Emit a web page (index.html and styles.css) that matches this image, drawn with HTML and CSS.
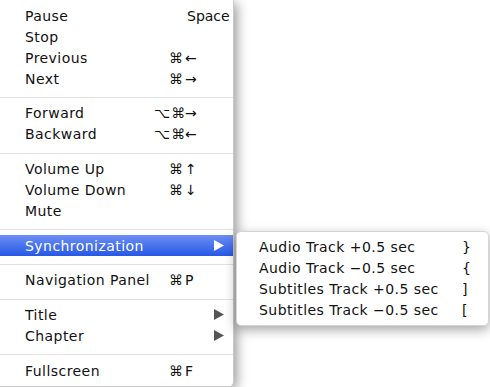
FILE: index.html
```html
<!DOCTYPE html>
<html lang="en">

<head>
    <meta charset="UTF-8">
    <title>Playback Menu</title>
    <link rel="stylesheet" href="styles.css">
</head>

<body>

    <!-- Main playback menu -->
    <div class="menu">
        <div class="item"><span class="label">Pause</span><span class="mods"></span><span class="key space">Space</span></div>
        <div class="item"><span class="label">Stop</span></div>
        <div class="item"><span class="label">Previous</span><span class="mods">⌘</span><span class="key">←</span></div>
        <div class="item"><span class="label">Next</span><span class="mods">⌘</span><span class="key">→</span></div>
        <div class="sep"></div>
        <div class="item"><span class="label">Forward</span><span class="mods">⌥⌘</span><span class="key">→</span></div>
        <div class="item"><span class="label">Backward</span><span class="mods">⌥⌘</span><span class="key">←</span></div>
        <div class="sep"></div>
        <div class="item"><span class="label">Volume Up</span><span class="mods">⌘</span><span class="key">↑</span></div>
        <div class="item"><span class="label">Volume Down</span><span class="mods">⌘</span><span class="key">↓</span></div>
        <div class="item"><span class="label">Mute</span></div>
        <div class="sep"></div>
        <div class="item selected">
            <span class="label">Synchronization</span><span class="mods"></span>
            <span class="key"><svg class="arrow" width="10" height="11" viewBox="0 0 10 11"><polygon points="0,0 10,5.5 0,11" /></svg></span>
        </div>
        <div class="sep"></div>
        <div class="item"><span class="label">Navigation Panel</span><span class="mods">⌘</span><span class="key">P</span></div>
        <div class="sep"></div>
        <div class="item">
            <span class="label">Title</span><span class="mods"></span>
            <span class="key"><svg class="arrow" width="10" height="11" viewBox="0 0 10 11"><polygon points="0,0 10,5.5 0,11" /></svg></span>
        </div>
        <div class="item">
            <span class="label">Chapter</span><span class="mods"></span>
            <span class="key"><svg class="arrow" width="10" height="11" viewBox="0 0 10 11"><polygon points="0,0 10,5.5 0,11" /></svg></span>
        </div>
        <div class="sep"></div>
        <div class="item"><span class="label">Fullscreen</span><span class="mods">⌘</span><span class="key">F</span></div>
    </div>

    <!-- Synchronization submenu -->
    <div class="submenu">
        <div class="item"><span class="label">Audio Track +0.5 sec</span><span class="key">}</span></div>
        <div class="item"><span class="label">Audio Track −0.5 sec</span><span class="key">{</span></div>
        <div class="item"><span class="label">Subtitles Track +0.5 sec</span><span class="key">]</span></div>
        <div class="item"><span class="label">Subtitles Track −0.5 sec</span><span class="key">[</span></div>
    </div>

</body>

</html>
```

FILE: styles.css
```css
body {
    margin: 0;
    padding: 0;
    background-color: #fff;
    font-family: "DejaVu Sans", "Liberation Sans", sans-serif;
    font-size: 14px;
    color: #111;
    position: relative;
    height: 387px;
    overflow: hidden;
}

/* Main menu */
.menu {
    width: 233px;
    padding: 5px 0 5px 0;
    background-color: #fff;
    border-right: 1px solid #c9c9c9;
    border-bottom: 1px solid #c9c9c9;
    border-bottom-right-radius: 5px;
    box-shadow: 3px 3px 12px rgba(0, 0, 0, 0.4);
}

.item {
    display: grid;
    grid-template-columns: 1fr 30px 49px;
    align-items: center;
    height: 21px;
    padding-left: 25px;
    white-space: nowrap;
}

.label {
    letter-spacing: 0.45px;
}

.mods {
    text-align: right;
    letter-spacing: 1px;
}

.key {
    padding-left: 1px;
}

.key.space {
    padding-left: 3px;
}

.arrow {
    display: block;
    margin-left: 29px;
    fill: #555;
}

.selected {
    color: #fff;
    background: linear-gradient(#6c8ff4, #2658e6);
}

.selected .arrow {
    fill: #fff;
}

/* Separator line between groups */
.sep {
    height: 1px;
    margin: 8px 0 4.7px 0;
    background-color: #e2e2e2;
}

.submenu {
    position: absolute;
    left: 236px;
    top: 231px;
    width: 251px;
    padding: 4px 0 5px 0;
    background-color: #fff;
    border: 1px solid #d4d4d4;
    border-radius: 5px;
    box-shadow: 0 4px 12px rgba(0, 0, 0, 0.35);
}

.submenu .item {
    grid-template-columns: 1fr 27px;
    padding-left: 22px;
}
```
